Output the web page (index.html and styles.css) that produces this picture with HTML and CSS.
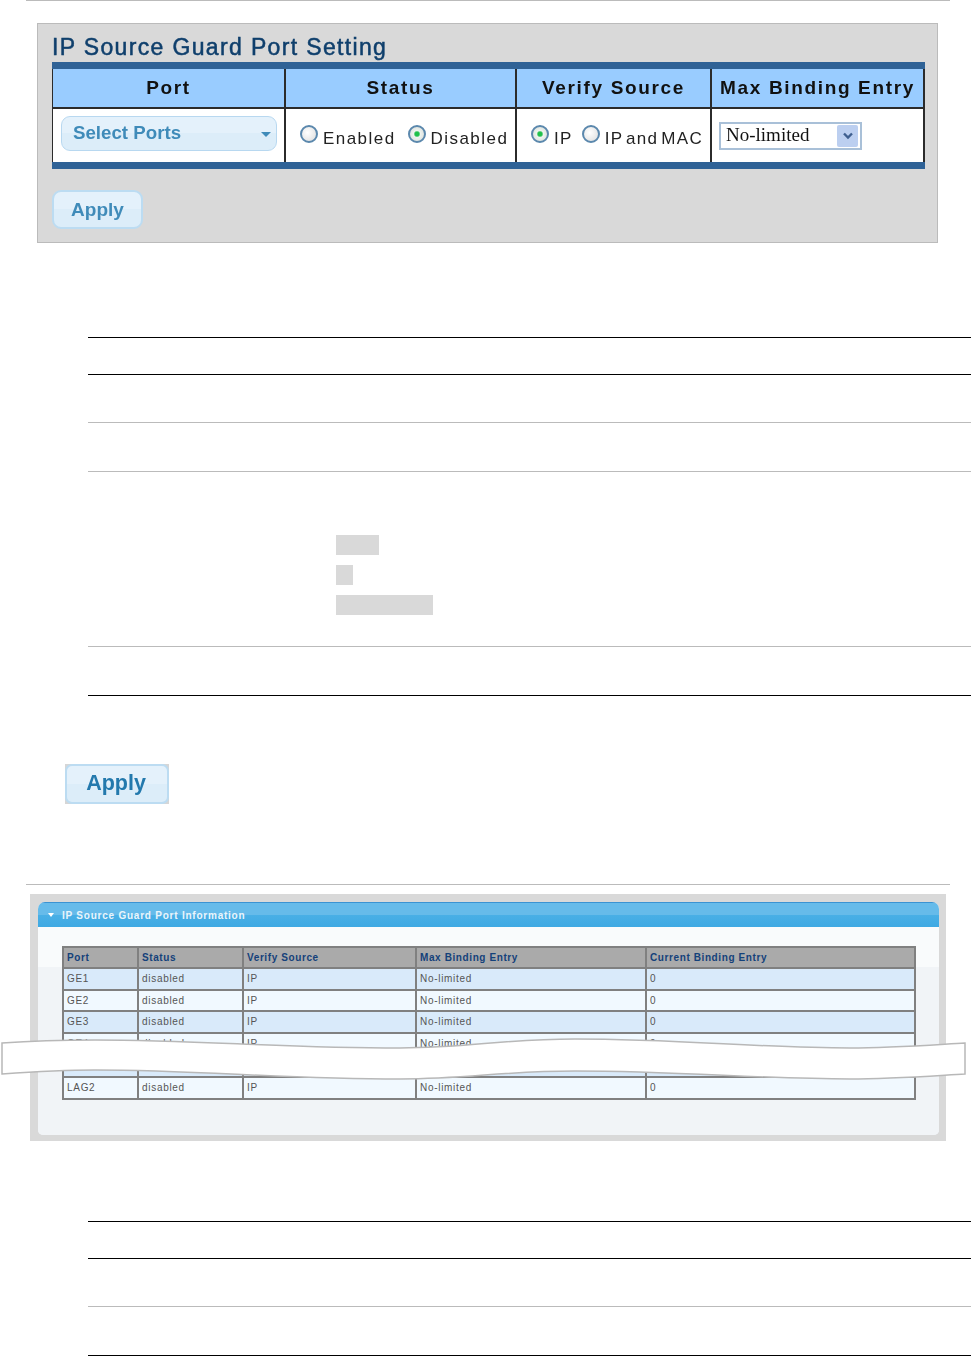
FILE: index.html
```html
<!DOCTYPE html>
<html lang="en">
<head>
<meta charset="utf-8">
<title>IP Source Guard Port Setting</title>
<link rel="stylesheet" href="styles.css">
</head>
<body>
<div class="page">
  <div class="page-rule"></div>

  <section class="setting-panel">
    <h1 class="setting-title">IP Source Guard Port Setting</h1>
    <div class="setting-frame">
      <table class="setting-table">
        <colgroup><col class="c-port"><col class="c-status"><col class="c-verify"><col class="c-max"></colgroup>
        <thead>
          <tr><th>Port</th><th>Status</th><th>Verify Source</th><th>Max Binding Entry</th></tr>
        </thead>
        <tbody>
          <tr>
            <td>
              <div class="select-ports"><span>Select Ports</span><i class="caret"></i></div>
            </td>
            <td>
              <div class="radio-group status-group">
                <span class="radio"></span><span class="radio-label">Enabled</span>
                <span class="radio on"></span><span class="radio-label">Disabled</span>
              </div>
            </td>
            <td>
              <div class="radio-group verify-group">
                <span class="radio on"></span><span class="radio-label">IP</span>
                <span class="radio"></span><span class="radio-label">IP and MAC</span>
              </div>
            </td>
            <td>
              <div class="native-select">
                <span>No-limited</span>
                <span class="native-arrow">
                  <svg width="12" height="8" viewBox="0 0 12 8"><path d="M2 1.5 L6 5.5 L10 1.5" fill="none" stroke="#3f5f8f" stroke-width="2.4"/></svg>
                </span>
              </div>
            </td>
          </tr>
        </tbody>
      </table>
    </div>
    <div class="apply-small">Apply</div>
  </section>

  <div class="doc-table doc-first">
    <div class="doc-row h37"></div>
    <div class="doc-row h48"></div>
    <div class="doc-row h49 soft"></div>
    <div class="doc-row h175 soft">
      <div class="chip w43"></div>
      <div class="chip w17"></div>
      <div class="chip w97"></div>
    </div>
    <div class="doc-row h49 soft"></div>
  </div>

  <div class="apply-wrap"><div class="apply-large">Apply</div></div>

  <div class="page-rule second"></div>

  <section class="info-shot">
    <div class="info-card">
      <div class="info-head"><i class="head-caret"></i><span>IP Source Guard Port Information</span></div>
      <div class="info-body">
        <table class="info-table">
          <colgroup><col class="i-port"><col class="i-status"><col class="i-verify"><col class="i-max"><col class="i-cur"></colgroup>
          <thead>
            <tr><th>Port</th><th>Status</th><th>Verify Source</th><th>Max Binding Entry</th><th>Current Binding Entry</th></tr>
          </thead>
          <tbody>
            <tr class="odd"><td>GE1</td><td>disabled</td><td>IP</td><td>No-limited</td><td>0</td></tr>
            <tr class="short"><td>GE2</td><td>disabled</td><td>IP</td><td>No-limited</td><td>0</td></tr>
            <tr class="odd"><td>GE3</td><td>disabled</td><td>IP</td><td>No-limited</td><td>0</td></tr>
            <tr><td>GE4</td><td>disabled</td><td>IP</td><td>No-limited</td><td>0</td></tr>
            <tr class="odd"><td>LAG1</td><td>disabled</td><td>IP</td><td>No-limited</td><td>0</td></tr>
            <tr><td>LAG2</td><td>disabled</td><td>IP</td><td>No-limited</td><td>0</td></tr>
          </tbody>
        </table>
      </div>
    </div>
    <svg class="tear" width="971" height="46" viewBox="0 1036 971 46">
      <path d="M2 1043 C30 1041 60 1040 95 1040 C200 1040 280 1048 400 1048 C470 1048 500 1039 575 1039 C680 1039 760 1048 850 1048 C890 1048 930 1045 965 1043 L965 1074 C930 1076 890 1079 850 1079 C760 1079 680 1071 575 1071 C500 1071 470 1079 400 1079 C280 1079 200 1070 95 1070 C60 1070 30 1072 2 1074 Z" fill="#fff" stroke="#b8b8b8" stroke-width="1.5"/>
    </svg>
  </section>

  <div class="doc-table doc-second">
    <div class="doc-row h37"></div>
    <div class="doc-row h48"></div>
    <div class="doc-row h49 soft"></div>
  </div>
</div>
</body>
</html>
```

FILE: styles.css
```css
* { box-sizing: border-box; }
html, body { margin: 0; padding: 0; background: #fff; }
body { font-family: "Liberation Sans", Arial, sans-serif; }

.page { width: 971px; height: 1356px; overflow: hidden; }

.page-rule { height: 1px; margin: 0 21px 0 26px; background: #bbb; }
.page-rule.second { margin-top: 80px; }

/* top screenshot */
.setting-panel {
  width: 901px; height: 220px; margin: 22px 0 0 37px; padding: 0 0 0 14px;
  background: #d9d9d9; border: 1px solid #bbb;
}
.setting-title {
  height: 38px; margin: 0; padding-top: 9px;
  font-size: 23px; line-height: 28px; font-weight: 400; letter-spacing: 1.35px;
  color: #0f3f6c; -webkit-text-stroke: .5px #0f3f6c; white-space: nowrap;
  filter: blur(.35px);
}
.setting-frame {
  width: 873px; border-top: 7px solid #2f6296; border-bottom: 7px solid #2f6296;
}
.setting-table { width: 873px; border-collapse: separate; border-spacing: 0; table-layout: fixed; }
.c-port { width: 234px; }
.c-status { width: 231px; }
.c-verify { width: 195px; }
.c-max { width: 213px; }
.setting-table th, .setting-table td {
  padding: 0; border-right: 2px solid #2b2b2b;
}
.setting-table th:first-child, .setting-table td:first-child { border-left: 1px solid #2b2b2b; }
.setting-table th {
  height: 40px; background: #99ccff; border-bottom: 2px solid #2b2b2b;
  font-size: 19px; line-height: 36px; font-weight: 700; letter-spacing: 1.65px;
  color: #111; text-align: center; white-space: nowrap;
  filter: blur(.3px);
}
.setting-table td { height: 53px; background: #fff; vertical-align: top; }

.select-ports {
  display: flex; align-items: center; justify-content: space-between;
  height: 35px; margin: 7px 7px 0 8px; padding: 0 5px 2px 11px;
  border: 1px solid #b8d8f0; border-radius: 9px;
  background: linear-gradient(#e4f1fb 0 50%, #dcedf9 50% 100%);
  font-size: 18.7px; font-weight: 700; color: #3f8bb9;
  filter: blur(.35px);
}
.caret {
  width: 0; height: 0; border-left: 5px solid transparent; border-right: 5px solid transparent;
  border-top: 5px solid #3f8bb9; margin-top: 3px;
}

.radio-group {
  display: flex; align-items: center; height: 53px; padding-left: 14px;
  font-size: 17px; color: #222; filter: blur(.3px);
}
.status-group { letter-spacing: 1.45px; }
.verify-group { letter-spacing: 1.3px; word-spacing: -3px; }
.radio {
  flex: none; width: 18px; height: 18px; border-radius: 50%;
  border: 2px solid #5b88ad;
  background: radial-gradient(circle at 40% 40%, #fff, #dcdcdc);
  margin-top: -4px;
}
.radio.on { background: radial-gradient(circle, #1fc04a 0 2px, #eef3ef 3.5px, #d5d9d5 100%); }
.radio-label { margin: 7px 12px 0 5px; white-space: nowrap; }
.verify-group .radio-label { margin-right: 9px; }

.native-select {
  display: flex; align-items: center; justify-content: space-between;
  width: 143px; height: 28px; margin: 13px 0 0 7px; padding: 0 2px 2px 5px;
  border: 2px solid #a9c0d8; background: #fff;
  font-family: "Liberation Serif", "Times New Roman", serif; font-size: 19px; color: #111;
  filter: blur(.3px);
}
.native-arrow {
  display: flex; align-items: center; justify-content: center;
  width: 21px; height: 22px; margin-bottom: -2px; border-radius: 2px; background: #bccff0;
}

.apply-small {
  width: 91px; height: 39px; margin-top: 21px;
  border: 2px solid #bcdcf2; border-radius: 9px;
  background: linear-gradient(#e4f1fb 0 50%, #dcedf9 50% 100%);
  font-size: 19px; line-height: 35px; font-weight: 700; text-align: center; color: #3f8bb9;
  filter: blur(.35px);
}

/* document rules */
.doc-table { margin-left: 88px; border-bottom: 1px solid #000; }
.doc-first { margin-top: 94px; }
.doc-second { margin-top: 80px; }
.doc-row { border-top: 1px solid #000; }
.doc-row.soft { border-top-color: #bbb; }
.h37 { height: 37px; }
.h48 { height: 48px; }
.h49 { height: 49px; }
.h175 { height: 175px; padding: 63px 0 0 248px; display: flex; flex-direction: column; gap: 10px; }
.chip { height: 20px; background: #d9d9d9; }
.w43 { width: 43px; }
.w17 { width: 17px; }
.w97 { width: 97px; }

.apply-wrap { width: 104px; height: 40px; margin: 68px 0 0 65px; background: #d6d6d6; }
.apply-large {
  height: 40px; padding-right: 2px; border: 2px solid #bcdcf2; border-radius: 7px;
  background: linear-gradient(#e4f1fb 0 50%, #dcedf9 50% 100%);
  font-size: 21.5px; line-height: 35px; font-weight: 700; text-align: center; color: #2379ad;
  filter: blur(.35px);
}

/* information screenshot */
.info-shot {
  position: relative; width: 916px; height: 247px; margin: 9px 0 0 30px;
  padding: 8px 7px 6px 8px; background: #d9d9d9;
}
.info-card { height: 233px; border-radius: 7px 7px 5px 5px; overflow: hidden; background: #f1f4f7; }
.info-head {
  display: flex; align-items: center; height: 25px; padding: 0 0 0 10px;
  border-top: 1px solid #3a93d3;
  background: linear-gradient(#66bbea 0 50%, #49afe6 50%, #3fa9e3 100%);
  font-size: 10px; font-weight: 700; letter-spacing: .77px; color: #eaf5fb;
}
.head-caret {
  width: 0; height: 0; margin-right: 8px; border-left: 3.5px solid transparent; border-right: 3.5px solid transparent;
  border-top: 4px solid #fff;
}
.info-body {
  height: 208px; padding: 19px 0 0 24px;
  background: linear-gradient(#f9fbfc 0 40px, #f1f4f7 40px);
}
.info-table { width: 852px; border-collapse: collapse; table-layout: fixed; }
.i-port { width: 75px; }
.i-status { width: 105px; }
.i-verify { width: 173px; }
.i-max { width: 230px; }
.i-cur { width: 269px; }
.info-table th, .info-table td {
  height: 22px; padding: 0 3px; border: 2px solid #808080; text-align: left; white-space: nowrap;
  font-size: 10px; line-height: 14px;
}
.info-table th { height: 21px; background: #aaa; color: #14417a; font-weight: 700; letter-spacing: .6px; }
.info-table td { background: #f1f9ff; color: #555; letter-spacing: .7px; }
.info-table .odd td { background: #d9eafa; }
.info-table .short td { height: 21px; }

.tear { position: absolute; left: -30px; top: 142px; }
```
